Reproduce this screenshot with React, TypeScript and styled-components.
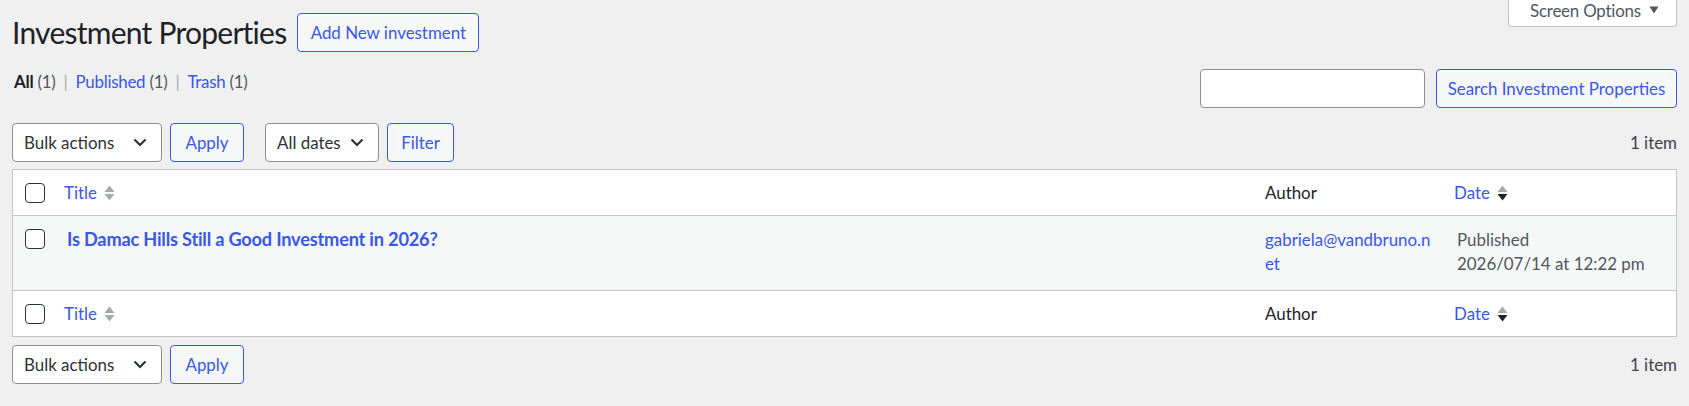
import styled, { createGlobalStyle } from 'styled-components';

const GlobalStyle = createGlobalStyle`
  body {
    margin: 0;
    background: #f0f0f1;
    color: #3c434a;
    font-family: Lato, "Noto Sans", sans-serif;
    font-size: 16.9px;
  }
  * {
    box-sizing: border-box;
  }
`;

const Wrap = styled.div`
  padding: 0 12px;
`;

const TopBar = styled.div`
  display: flex;
  justify-content: space-between;
  align-items: flex-start;
`;

const Heading = styled.div`
  display: flex;
  align-items: center;
  gap: 11px;
  padding-top: 12px;

  h1 {
    margin: 0;
    font-size: 30px;
    font-weight: 400;
    letter-spacing: -0.75px;
    color: #1d2327;
    line-height: 40px;
  }
`;

const ScreenOptions = styled.button`
  display: flex;
  align-items: center;
  gap: 8px;
  height: 27px;
  width: 169px;
  padding: 0 0 6px 21px;
  border: 1px solid #c3c4c7;
  border-top: none;
  border-radius: 0 0 4px 4px;
  background: #fff;
  color: #50575e;
  font: inherit;
  letter-spacing: -0.2px;
`;

const Button = styled.button<{ $width?: number }>`
  height: 39px;
  width: ${(p) => (p.$width ? `${p.$width}px` : 'auto')};
  padding: 0;
  border: 1px solid #3858e9;
  border-radius: 4px;
  background: #f6f7f7;
  color: #3858e9;
  font: inherit;
  white-space: nowrap;
`;

const SubRow = styled.div`
  display: flex;
  justify-content: space-between;
  align-items: flex-start;
  margin-top: 17px;
`;

const ViewLinks = styled.ul`
  display: flex;
  margin: 0;
  padding: 1px 0 0 2px;
  list-style: none;
  line-height: 23px;
  letter-spacing: -0.25px;
  color: #50575e;

  li + li::before {
    content: '|';
    color: #a7aaad;
    margin: 0 8px;
  }

  a {
    color: #3858e9;
    text-decoration: none;
  }

  .current {
    color: #1d2327;
    font-weight: 700;
  }
`;

const SearchBox = styled.div`
  display: flex;
  gap: 11px;
`;

const SearchInput = styled.input`
  width: 225px;
  height: 39px;
  border: 1px solid #8c8f94;
  border-radius: 4px;
  background: #fff;
  font: inherit;
`;

const TableNav = styled.div<{ $top?: boolean }>`
  display: flex;
  justify-content: space-between;
  align-items: center;
  margin: ${(p) => (p.$top ? '15px 0 7px' : '8px 0 0')};
`;

const Actions = styled.div`
  display: flex;
  align-items: center;
  gap: 8px;
`;

const Select = styled.div<{ $width: number; $gap?: number }>`
  display: flex;
  align-items: center;
  justify-content: space-between;
  width: ${(p) => p.$width}px;
  height: 39px;
  margin-left: ${(p) => p.$gap ?? 0}px;
  padding: 0 14px 0 11px;
  border: 1px solid #8c8f94;
  border-radius: 4px;
  background: #fff;
  color: #2c3338;
`;

const ItemCount = styled.span`
  color: #3c434a;
`;

const Table = styled.div`
  border: 1px solid #c3c4c7;
  background: #fff;
`;

const Row = styled.div<{ $head?: 'top' | 'bottom'; $alt?: boolean }>`
  display: grid;
  grid-template-columns: 41px 1fr 192px 232px;
  align-items: ${(p) => (p.$head ? 'center' : 'start')};
  height: ${(p) => (p.$head ? 46 : 74)}px;
  background: ${(p) => (p.$alt ? '#f6f7f7' : '#fff')};
  ${(p) => p.$head === 'top' && 'border-bottom: 1px solid #c3c4c7;'}
  ${(p) => p.$head === 'bottom' && 'border-top: 1px solid #c3c4c7;'}
`;

const CheckCell = styled.div<{ $top?: number }>`
  padding: ${(p) => p.$top ?? 0}px 0 0 12px;
  display: flex;
`;

const Checkbox = styled.span`
  width: 20px;
  height: 20px;
  border: 1px solid #2c3338;
  border-radius: 4px;
  background: #fff;
`;

const HeadCell = styled.div<{ $pad?: number }>`
  display: flex;
  align-items: center;
  gap: 7px;
  padding-left: ${(p) => p.$pad ?? 10}px;
  color: #1d2327;

  a {
    color: #3858e9;
    text-decoration: none;
  }
`;

const Cell = styled.div<{ $muted?: boolean }>`
  padding: 12px 13px 0;
  line-height: 23.5px;
  color: ${(p) => (p.$muted ? '#50575e' : '#3c434a')};
  word-break: break-all;

  a {
    color: #3858e9;
    text-decoration: none;
  }
`;

const RowTitle = styled.a`
  font-size: 18.2px;
  font-weight: 700;
  letter-spacing: -0.2px;
  color: #3858e9;
  text-decoration: none;
`;

const SortIcon = ({ active }: { active?: boolean }) => (
  <svg width="11" height="18" viewBox="0 0 11 18">
    <polygon points="0.5,8 5.5,1.5 10.5,8" fill="#a7aaad" />
    <polygon
      points="0.5,10 10.5,10 5.5,16.5"
      fill={active ? '#1d2327' : '#a7aaad'}
    />
  </svg>
);

const Chevron = () => (
  <svg width="14" height="9" viewBox="0 0 14 9">
    <polyline
      points="1.5,1.5 7,7 12.5,1.5"
      fill="none"
      stroke="#2c3338"
      strokeWidth="2.2"
    />
  </svg>
);

const Caret = () => (
  <svg width="10" height="8" viewBox="0 0 10 8">
    <polygon points="0.5,0.5 9.5,0.5 5,7.5" fill="#50575e" />
  </svg>
);

const BulkActions = ({ withFilter }: { withFilter?: boolean }) => (
  <Actions>
    <Select $width={150}>
      Bulk actions <Chevron />
    </Select>
    <Button $width={74}>Apply</Button>
    {withFilter && (
      <>
        <Select $width={114} $gap={13}>
          All dates <Chevron />
        </Select>
        <Button $width={67}>Filter</Button>
      </>
    )}
  </Actions>
);

const ColumnHeads = ({ position }: { position: 'top' | 'bottom' }) => (
  <Row $head={position}>
    <CheckCell>
      <Checkbox />
    </CheckCell>
    <HeadCell>
      <a href="#">Title</a>
      <SortIcon />
    </HeadCell>
    <HeadCell $pad={13}>Author</HeadCell>
    <HeadCell>
      <a href="#">Date</a>
      <SortIcon active />
    </HeadCell>
  </Row>
);

export default function App() {
  return (
    <Wrap>
      <GlobalStyle />
      <TopBar>
        <Heading>
          <h1>Investment Properties</h1>
          <Button $width={182}>Add New investment</Button>
        </Heading>
        <ScreenOptions>
          <span>Screen Options</span>
          <Caret />
        </ScreenOptions>
      </TopBar>

      <SubRow>
        <ViewLinks>
          <li>
            <span className="current">All</span> (1)
          </li>
          <li>
            <a href="#">Published</a> (1)
          </li>
          <li>
            <a href="#">Trash</a> (1)
          </li>
        </ViewLinks>
        <SearchBox>
          <SearchInput type="search" />
          <Button $width={241}>Search Investment Properties</Button>
        </SearchBox>
      </SubRow>

      <TableNav $top>
        <BulkActions withFilter />
        <ItemCount>1 item</ItemCount>
      </TableNav>

      <Table>
        <ColumnHeads position="top" />
        <Row $alt>
          <CheckCell $top={13}>
            <Checkbox />
          </CheckCell>
          <Cell>
            <RowTitle href="#">
              Is Damac Hills Still a Good Investment in 2026?
            </RowTitle>
          </Cell>
          <Cell>
            <a href="#">gabriela@vandbruno.net</a>
          </Cell>
          <Cell $muted>
            Published
            <br />
            2026/07/14 at 12:22 pm
          </Cell>
        </Row>
        <ColumnHeads position="bottom" />
      </Table>

      <TableNav>
        <BulkActions />
        <ItemCount>1 item</ItemCount>
      </TableNav>
    </Wrap>
  );
}
